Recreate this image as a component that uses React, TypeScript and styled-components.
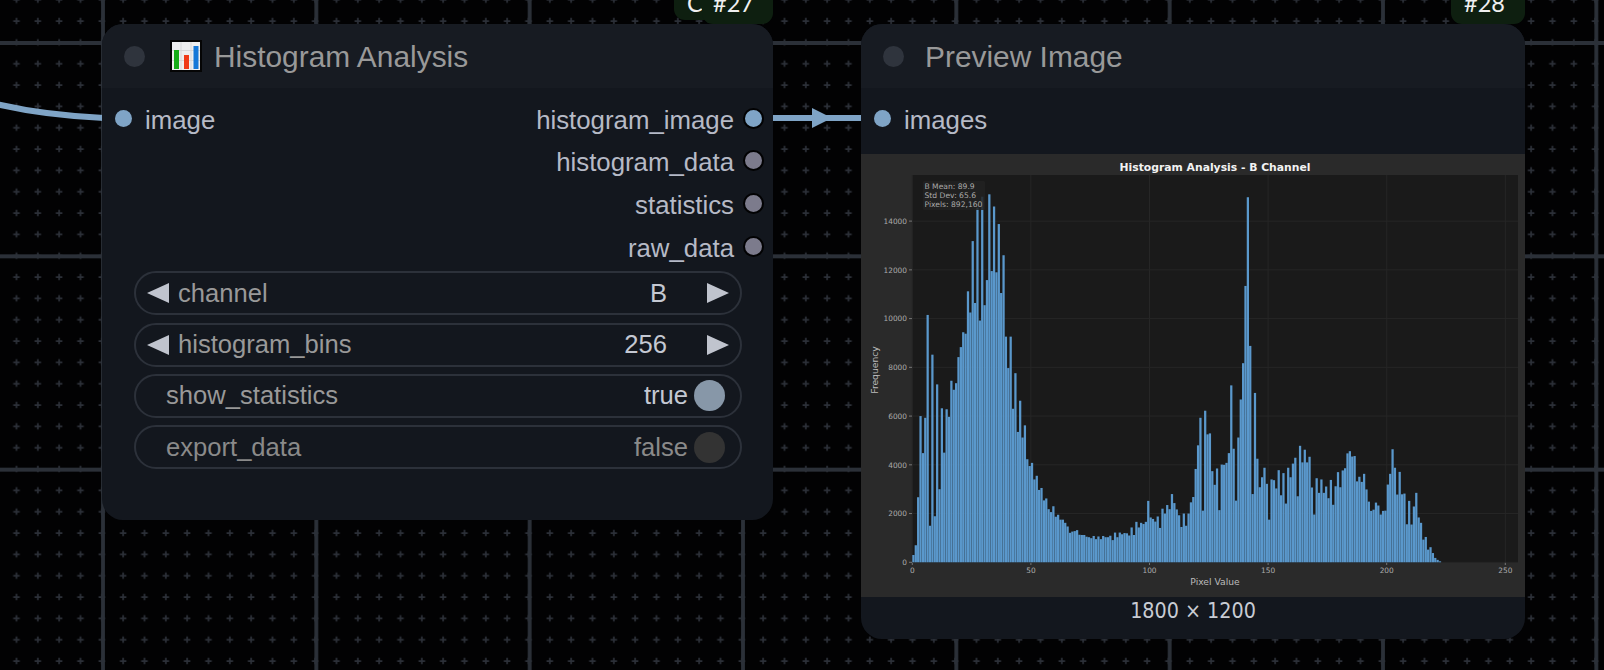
import React from "react";
import styled, { createGlobalStyle } from "styled-components";

const Global = createGlobalStyle`
  html, body { margin: 0; padding: 0; background: #020203; }
  body { font-family: "Liberation Sans", Arial, sans-serif; }
`;

// bin heights read off the histogram, one per pixel value
const BINS = [
  300, 700, 2670, 6000, 4480, 5930, 10150, 1500, 8520, 1890, 7300, 3000, 6320, 4500, 6280, 5970,
  7450, 7080, 7350, 8420, 8830, 9440, 9380, 11120, 10250, 13180, 10640, 14550, 9920, 15000, 10550, 11580,
  15100, 11950, 14600, 11900, 13880, 11050, 12600, 9260, 7970, 9260, 6300, 7760, 5350, 6630, 5120, 5620,
  4230, 3950, 4080, 3400, 3550, 2970, 3050, 2540, 2620, 2180, 2060, 2300, 1870, 1950, 1750, 1750,
  1620, 1470, 1210, 1260, 1280, 1320, 1130, 1120, 1120, 1050, 1030, 990, 1080, 950, 1060, 950,
  1080, 1030, 1030, 1090, 910, 1220, 1030, 1220, 1150, 1200, 1190, 1100, 1430, 1120, 1660, 1430,
  1620, 1570, 1660, 2520, 1840, 1780, 1670, 1880, 1410, 2200, 2000, 2350, 2180, 2800, 2430, 2170,
  1930, 1450, 2000, 1500, 2000, 2460, 2680, 3830, 4800, 5930, 2120, 6220, 5250, 5290, 3740, 3180,
  3850, 2140, 4010, 4000, 4080, 4480, 7260, 4660, 2530, 5120, 6680, 8170, 11340, 14980, 8880, 2800,
  6950, 4250, 3080, 3490, 3880, 3220, 1750, 3400, 3370, 3030, 3780, 2750, 3660, 2410, 3880, 3490,
  4050, 4290, 2710, 4780, 4100, 4620, 4100, 4330, 3070, 1960, 3450, 2850, 3400, 2850, 3110, 2630,
  3380, 2360, 3120, 3700, 3080, 3770, 3860, 4470, 4560, 4340, 4360, 3320, 3510, 3300, 3630, 2990,
  2490, 2110, 2160, 2450, 2330, 1960, 2110, 2120, 3190, 3630, 4640, 3880, 2780, 3710, 2790, 2820,
  1560, 2520, 1550, 2290, 2850, 1840, 1620, 930, 1040, 520, 620, 380, 180, 100, 40,
];

const X0 = 51.3;
const Y0 = 408.3;
const PX = 2.372;
const PY = 0.02437;

const CanvasRoot = styled.div`
  position: relative;
  width: 1604px;
  height: 670px;
  overflow: hidden;
  background: #020203;
`;

const CanvasLayer = styled.svg`
  position: absolute;
  inset: 0;
`;

const Node = styled.div<{ $left: number; $width: number; $height: number }>`
  position: absolute;
  top: 24px;
  left: ${(p) => p.$left}px;
  width: ${(p) => p.$width}px;
  height: ${(p) => p.$height}px;
  display: flex;
  flex-direction: column;
  background: #13171e;
  border-radius: 21px;
`;

const Header = styled.div`
  height: 64px;
  flex: none;
  display: flex;
  align-items: center;
  padding-left: 22px;
  background: #171b22;
  border-radius: 21px 21px 0 0;
`;

const Pip = styled.span`
  width: 21px;
  height: 21px;
  border-radius: 50%;
  background: #2f343d;
`;

const Title = styled.span`
  position: relative;
  top: 1px;
  margin-left: 12px;
  font-size: 29.9px;
  color: #999999;
`;

const TitleSpaced = styled(Title)`
  margin-left: 21px;
`;

const Emoji = styled.svg`
  margin-left: 25px;
  flex: none;
`;

const Slots = styled.div`
  padding-top: 9px;
  display: flex;
  justify-content: space-between;
`;

const SlotColumn = styled.div`
  display: flex;
  flex-direction: column;
`;

const Slot = styled.div<{ $out?: boolean }>`
  height: 42.67px;
  display: flex;
  align-items: center;
  gap: 9px;
  flex-direction: ${(p) => (p.$out ? "row-reverse" : "row")};
  padding: ${(p) => (p.$out ? "0 9px 0 0" : "0 0 0 13px")};
  font-size: 25.8px;
  color: #b6bac6;
`;

const SlotLabel = styled.span`
  position: relative;
  top: 2px;
`;

const Dot = styled.span<{ $color: string; $out?: boolean }>`
  width: 17px;
  height: 17px;
  box-sizing: content-box;
  border-radius: 50%;
  background: ${(p) => p.$color};
  border: ${(p) => (p.$out ? "2px solid #020203" : "none")};
  margin-right: ${(p) => (p.$out ? "0" : "4px")};
`;

const Widgets = styled.div`
  margin: 3.5px 31px 0 32px;
  display: flex;
  flex-direction: column;
  gap: 7.2px;
`;

const Widget = styled.div`
  box-sizing: border-box;
  height: 44.2px;
  border: 2px solid #2c313a;
  border-radius: 22px;
  display: flex;
  align-items: center;
  font-size: 25.6px;
  padding: 0 11px 0 11px;
  color: #999999;
`;

const Toggle = styled(Widget)`
  padding: 0 15px 0 30px;
`;

const WidgetLabel = styled.span<{ $dim?: boolean }>`
  margin-right: auto;
  color: ${(p) => (p.$dim ? "#8a8a8a" : "#999999")};
`;

const WidgetValue = styled.span<{ $dim?: boolean }>`
  color: ${(p) => (p.$dim ? "#8a8a8a" : "#c4c8d2")};
`;

const ArrowLeft = styled.span`
  width: 0;
  height: 0;
  margin-right: 9px;
  border-style: solid;
  border-width: 10.5px 22px 10.5px 0;
  border-color: transparent #c0c4ce transparent transparent;
`;

const ArrowRight = styled.span`
  width: 0;
  height: 0;
  margin-left: 40px;
  border-style: solid;
  border-width: 10.5px 0 10.5px 22px;
  border-color: transparent transparent transparent #c0c4ce;
`;

const Knob = styled.span<{ $on?: boolean }>`
  width: 31px;
  height: 31px;
  margin-left: 6px;
  border-radius: 50%;
  background: ${(p) => (p.$on ? "#8797a8" : "#333333")};
`;

const Preview = styled.div`
  margin-top: 14px;
  flex: none;
  height: 443px;
  background: #2a2a2a;
`;

const Size = styled.div`
  height: 28px;
  display: flex;
  align-items: center;
  justify-content: center;
  font-family: "DejaVu Sans Condensed", "DejaVu Sans", sans-serif;
  font-size: 21.3px;
  color: #c8ccd4;
`;

const Badge = styled.div<{ $right: number; $width: number; $bottom: number; $indent: number }>`
  position: absolute;
  top: 0;
  right: ${(p) => p.$right}px;
  width: ${(p) => p.$width}px;
  height: ${(p) => p.$bottom}px;
  box-sizing: border-box;
  padding-left: ${(p) => p.$indent}px;
  background: #0e1f10;
  border-radius: 0 0 11px 11px;
  font-family: Lato, sans-serif;
  font-size: 23.5px;
  line-height: 6.5px;
  color: #f0f0f0;
  white-space: nowrap;
`;

const ChartTitle = styled.text`
  font-family: "DejaVu Sans", sans-serif;
  font-size: 10.8px;
  font-weight: 700;
  fill: #f2f2f2;
`;

const Tick = styled.text`
  font-family: "DejaVu Sans", sans-serif;
  font-size: 7.4px;
  fill: #aaaaaa;
`;

const StatLine = styled(Tick)`
  font-size: 7.6px;
`;

const AxisLabel = styled(Tick)`
  font-size: 9.2px;
  fill: #bbbbbb;
`;

const Histogram = () => (
  <svg width={664} height={443} viewBox="0 0 664 443">
    <ChartTitle x={354} y={17} textAnchor="middle">Histogram Analysis - B Channel</ChartTitle>
    <rect x={51} y={21} width={606} height={387.5} fill="#1a1a1a" />
    {[0, 50, 100, 150, 200, 250].map((v) => (
      <g key={v}>
        <line x1={X0 + v * PX} x2={X0 + v * PX} y1={21} y2={408} stroke="#262626" />
        <line x1={X0 + v * PX} x2={X0 + v * PX} y1={408} y2={411} stroke="#aaaaaa" strokeWidth={0.6} />
        <Tick x={X0 + v * PX} y={419} textAnchor="middle">{v}</Tick>
      </g>
    ))}
    {[0, 2000, 4000, 6000, 8000, 10000, 12000, 14000].map((v) => (
      <g key={v}>
        <line x1={51} x2={657} y1={Y0 - v * PY} y2={Y0 - v * PY} stroke="#262626" />
        <line x1={48} x2={51} y1={Y0 - v * PY} y2={Y0 - v * PY} stroke="#aaaaaa" strokeWidth={0.6} />
        <Tick x={46} y={Y0 - v * PY + 2.7} textAnchor="end">{v}</Tick>
      </g>
    ))}
    {BINS.map((v, i) => (
      <rect key={i} x={X0 + i * PX} y={Y0 - v * PY} width={2.25} height={v * PY} fill="#5a98cc" />
    ))}
    <rect x={62} y={27} width={62} height={29} rx={1.5} fill="#222222" fillOpacity={0.85} />
    <StatLine x={63.5} y={35}>B Mean: 89.9</StatLine>
    <StatLine x={63.5} y={44}>Std Dev: 65.6</StatLine>
    <StatLine x={63.5} y={53}>Pixels: 892,160</StatLine>
    <AxisLabel x={354} y={431} textAnchor="middle">Pixel Value</AxisLabel>
    <AxisLabel x={0} y={0} textAnchor="middle" transform="translate(17 216) rotate(-90)">Frequency</AxisLabel>
  </svg>
);

export default function App() {
  return (
    <CanvasRoot>
      <Global />
      <CanvasLayer width={1604} height={670}>
        <defs>
          <pattern id="dots" width={21.333} height={21.333} patternUnits="userSpaceOnUse" patternTransform="translate(5.83 10.33)">
            <path d="M7.4 10.67h6.5M10.67 7.4v6.5" stroke="#2c3038" strokeWidth={1.7} />
          </pattern>
          <pattern id="lines" width={213.333} height={213.333} patternUnits="userSpaceOnUse" patternTransform="translate(103 43)">
            <path d="M0 0v213.333M0 0h213.333M213.333 0v213.333M0 213.333h213.333" stroke="#2b3038" strokeWidth={3.8} fill="none" />
          </pattern>
        </defs>
        <rect width={1604} height={670} fill="url(#dots)" />
        <rect width={1604} height={670} fill="url(#lines)" />
        <path d="M-4 104C30 112 60 116 104 118" stroke="#7fa4c6" strokeWidth={6} fill="none" />
        <path d="M770 118H864" stroke="#7fa4c6" strokeWidth={6} fill="none" />
        <path d="M812 108L832 118L812 128Z" fill="#7fa4c6" />
      </CanvasLayer>

      <Badge $right={1604 - 773 + 27} $width={72} $bottom={20} $indent={13}>C</Badge>
      <Badge $right={1604 - 773} $width={71} $bottom={24} $indent={11}>#27</Badge>
      <Badge $right={1604 - 1525} $width={74} $bottom={24} $indent={13}>#28</Badge>

      <Node $left={102} $width={671} $height={496}>
        <Header>
          <Pip />
          <Emoji width={32} height={32} viewBox="0 0 32 32">
            <rect x={0} y={0} width={32} height={32} fill="#050505" />
            <rect x={2} y={2} width={28} height={28} fill="#eeeeee" />
            <path d="M2 10.5h28M2 20.5h28M11 2v28M21 2v28" stroke="#d8d8d8" strokeWidth={1} />
            <rect x={4} y={10} width={5} height={19} fill="#17ad17" />
            <rect x={14} y={15} width={5} height={14} fill="#f03a17" />
            <rect x={23.5} y={6} width={5} height={23} fill="#1578d8" />
          </Emoji>
          <Title>Histogram Analysis</Title>
        </Header>
        <Slots>
          <SlotColumn>
            <Slot>
              <Dot $color="#7fa4c6" />
              <SlotLabel>image</SlotLabel>
            </Slot>
          </SlotColumn>
          <SlotColumn>
            {["histogram_image", "histogram_data", "statistics", "raw_data"].map((name, i) => (
              <Slot key={name} $out>
                <Dot $out $color={i === 0 ? "#7fa4c6" : "#7c7b8c"} />
                <SlotLabel>{name}</SlotLabel>
              </Slot>
            ))}
          </SlotColumn>
        </Slots>
        <Widgets>
          <Widget>
            <ArrowLeft />
            <WidgetLabel>channel</WidgetLabel>
            <WidgetValue>B</WidgetValue>
            <ArrowRight />
          </Widget>
          <Widget>
            <ArrowLeft />
            <WidgetLabel>histogram_bins</WidgetLabel>
            <WidgetValue>256</WidgetValue>
            <ArrowRight />
          </Widget>
          <Toggle>
            <WidgetLabel>show_statistics</WidgetLabel>
            <WidgetValue>true</WidgetValue>
            <Knob $on />
          </Toggle>
          <Toggle>
            <WidgetLabel $dim>export_data</WidgetLabel>
            <WidgetValue $dim>false</WidgetValue>
            <Knob />
          </Toggle>
        </Widgets>
      </Node>

      <Node $left={861} $width={664} $height={615}>
        <Header>
          <Pip />
          <TitleSpaced>Preview Image</TitleSpaced>
        </Header>
        <Slots>
          <SlotColumn>
            <Slot>
              <Dot $color="#7fa4c6" />
              <SlotLabel>images</SlotLabel>
            </Slot>
          </SlotColumn>
        </Slots>
        <Preview>
          <Histogram />
        </Preview>
        <Size>1800 × 1200</Size>
      </Node>
    </CanvasRoot>
  );
}
